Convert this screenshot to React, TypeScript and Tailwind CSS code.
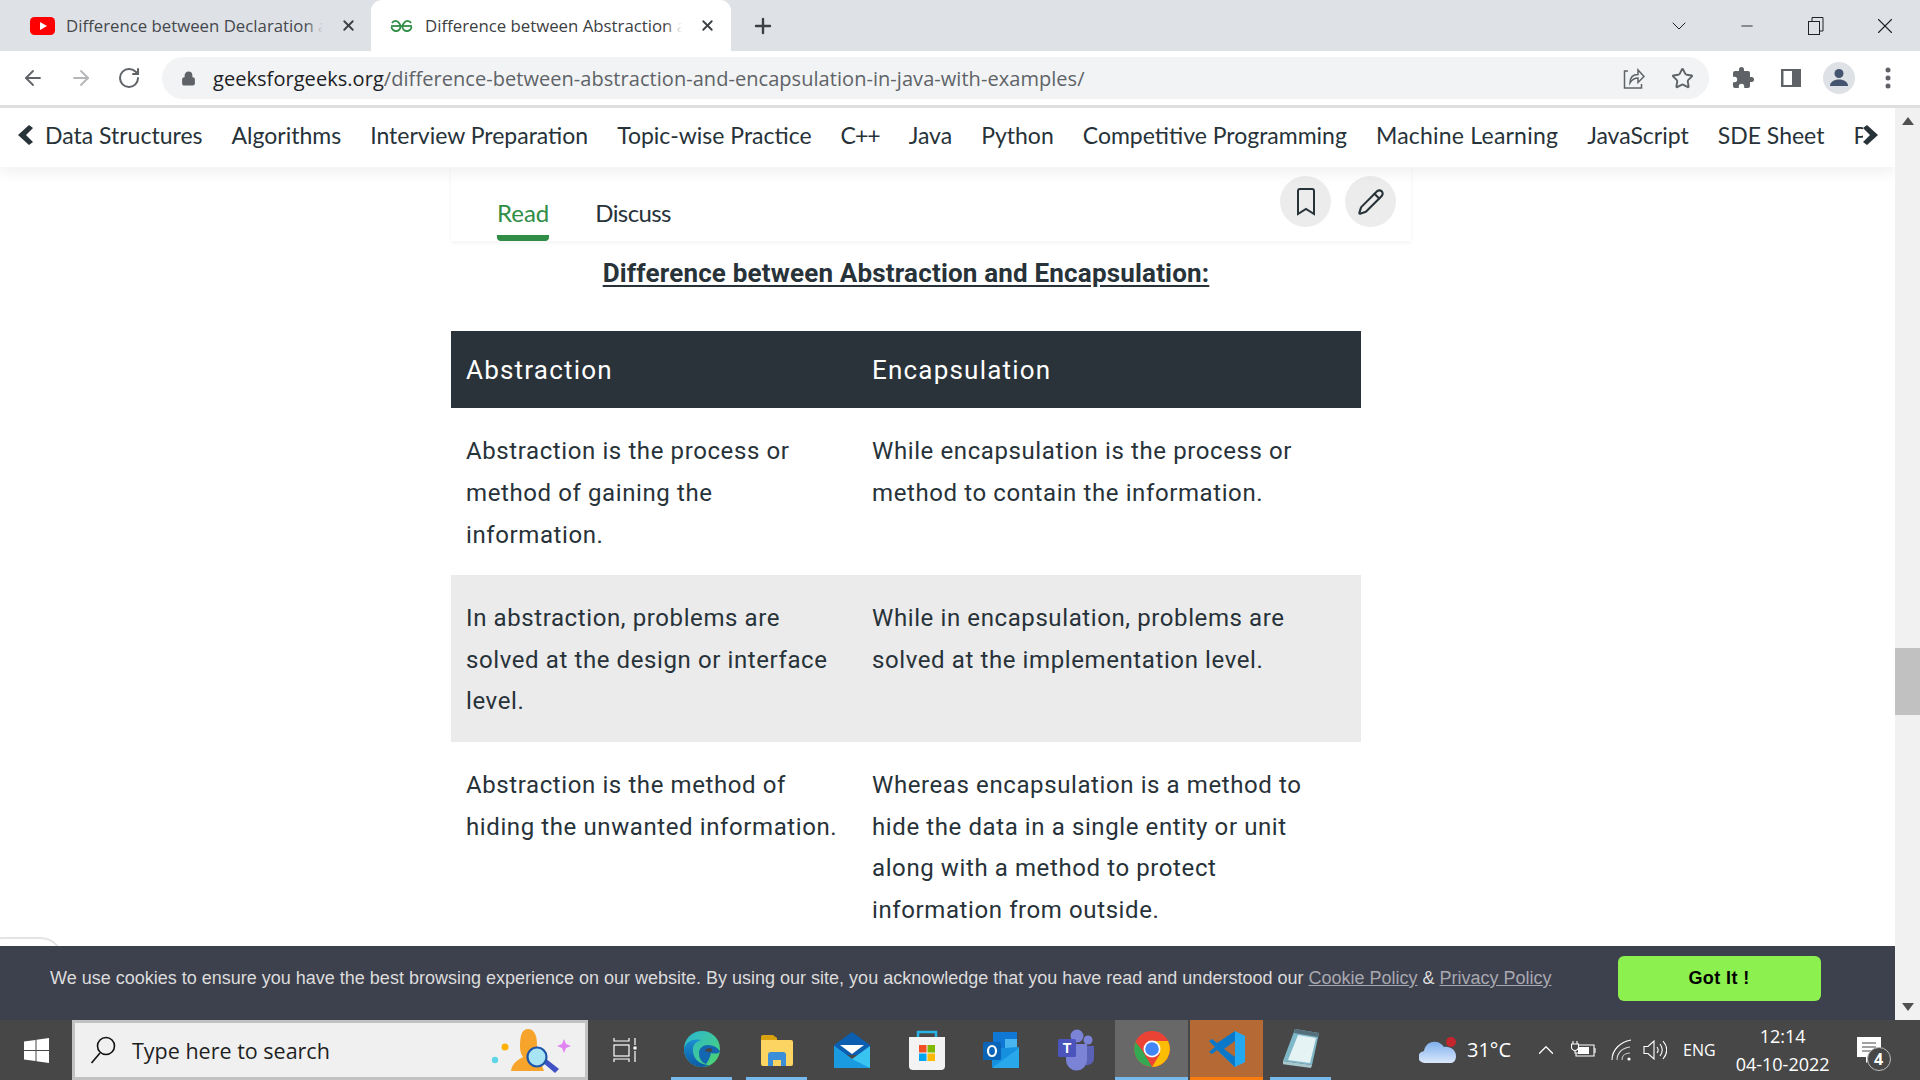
import { ArrowLeft, ArrowRight, RotateCw, Lock, Star, Plus, X, Minus, ChevronDown, Pencil, ChevronUp } from "lucide-react";

const navItems = ["Data Structures", "Algorithms", "Interview Preparation", "Topic-wise Practice", "C++", "Java", "Python", "Competitive Programming", "Machine Learning", "JavaScript", "SDE Sheet", "Practice"];

const rows = [
  { a: ["Abstraction is the process or", "method of gaining the", "information."], b: ["While encapsulation is the process or", "method to contain the information."], gray: false },
  { a: ["In abstraction, problems are", "solved at the design or interface", "level."], b: ["While in encapsulation, problems are", "solved at the implementation level."], gray: true },
  { a: ["Abstraction is the method of", "hiding the unwanted information."], b: ["Whereas encapsulation is a method to", "hide the data in a single entity or unit", "along with a method to protect", "information from outside."], gray: false },
];

function YoutubeIcon() {
  return (
    <svg width="25" height="18" viewBox="0 0 25 18">
      <rect width="25" height="18" rx="4.5" fill="#ff0000" />
      <path d="M10 5l7 4-7 4z" fill="#fff" />
    </svg>
  );
}

function GfgIcon() {
  return (
    <svg width="23" height="12" viewBox="0 0 23 12" fill="none" stroke="#2f8d46" strokeWidth="1.8">
      <path d="M1 6h21" />
      <path d="M2 3a4 4 0 0 1 7 0c1 1.500 1.500 2 1.500 3a4.500 4.500 0 0 1-9 1" />
      <path d="M21 3a4 4 0 0 0-7 0c-1 1.500-1.500 2-1.500 3a4.500 4.500 0 0 0 9 1" />
    </svg>
  );
}

function ShareIcon() {
  return (
    <svg width="22" height="24" viewBox="0 0 22 24" fill="none" stroke="#5f6368" strokeWidth="1.5">
      <path d="M5 5H1.500v17h17v-4" />
      <path d="M7 17c0-6 3-8.500 8-8.500V4l6 6.500-6 6V12c-4 0-6 1.500-8 5z" />
    </svg>
  );
}

function PuzzleIcon() {
  return (
    <svg width="24" height="24" viewBox="0 0 24 24" fill="#5f6368">
      <path d="M20.500 11H19V7a2 2 0 0 0-2-2h-4V3.500a2.500 2.500 0 0 0-5 0V5H4a2 2 0 0 0-2 2v3.800h1.500a2.700 2.700 0 0 1 0 5.400H2V20a2 2 0 0 0 2 2h3.800v-1.500a2.700 2.700 0 0 1 5.400 0V22H17a2 2 0 0 0 2-2v-4h1.500a2.500 2.500 0 0 0 0-5z" />
    </svg>
  );
}

function SidePanelIcon() {
  return (
    <svg width="22" height="20" viewBox="0 0 22 20">
      <rect x="1" y="1" width="20" height="18" fill="#5f6368" />
      <rect x="3.500" y="3" width="8.500" height="14" fill="#fff" />
    </svg>
  );
}

function AvatarIcon() {
  return (
    <div className="ml-[-4px] w-[32px] h-[32px] rounded-full bg-[#dee1e6] flex items-center justify-center">
      <svg width="22" height="24" viewBox="0 0 22 24" fill="#45556f">
        <circle cx="11" cy="7.500" r="4.500" />
        <path d="M2 20c0-4 4-6.500 9-6.500s9 2.500 9 6.500z" />
      </svg>
    </div>
  );
}

function NavChevron({ right }: { right?: boolean }) {
  return (
    <svg width="15" height="20" viewBox="0 0 15 20" fill="#273239" className={right ? "-scale-x-100" : ""}>
      <path d="M11 0l4 3-7 7 7 7-4 3L0 10z" />
    </svg>
  );
}

function BookmarkIcon() {
  return (
    <svg width="20" height="28" viewBox="0 0 20 28" fill="none" stroke="#273239" strokeWidth="2">
      <path d="M2 3a2 2 0 0 1 2-2h12a2 2 0 0 1 2 2v23l-8-5-8 5z" />
    </svg>
  );
}

function SearchGlass() {
  return (
    <svg width="26" height="28" viewBox="0 0 26 28" fill="none" stroke="#111" strokeWidth="1.600">
      <circle cx="16" cy="10" r="8.500" />
      <path d="M10 17L1.500 27" />
    </svg>
  );
}

function WindowsLogo() {
  return (
    <svg width="25" height="25" viewBox="0 0 25 25" fill="#fff">
      <path d="M0 3.500l11.500-1.600v10H0zM12.500 1.700L25 0v12h-12.500zM0 13h11.500v10L0 21.500zM12.500 13H25v12l-12.500-1.700z" />
    </svg>
  );
}

function CortanaArt() {
  return (
    <svg width="80" height="44" viewBox="0 0 80 44">
      <circle cx="14" cy="18" r="3.500" fill="#ffb300" />
      <circle cx="4" cy="31" r="3.200" fill="#5ed6e6" />
      <path d="M73 10l2 5 5 2-5 2-2 5-2-5-5-2 5-2z" fill="#e184f2" />
      <path d="M20 42c1-7 6-11 12-14-2-3-3-6-3-10 0-12 2-18 8-18s9 6 9 16l1 10 6 16z" fill="#f6a42c" />
      <path d="M50 32l4-3 14 11-4 4z" fill="#3f51c5" />
      <circle cx="46" cy="28" r="9.500" fill="#a9e4f5" stroke="#1e55a8" strokeWidth="2.200" />
    </svg>
  );
}

function TaskViewIcon() {
  return (
    <svg width="24" height="26" viewBox="0 0 24 26" fill="none" stroke="#fff" strokeWidth="1.200">
      <path d="M1 1v3h15V1M1 25v-3h15v3" />
      <rect x="1" y="8" width="15" height="11" />
      <path d="M22 1v7M22 14v11" />
      <rect x="20.500" y="9.500" width="3" height="3" fill="#fff" stroke="none" />
    </svg>
  );
}

function EdgeIcon() {
  return (
    <svg width="36" height="36" viewBox="0 0 36 36">
      <defs>
        <linearGradient id="edgeA" x1="0" y1="0" x2="1" y2="1">
          <stop offset="0" stopColor="#2ab5d6" />
          <stop offset="1" stopColor="#4fd66a" />
        </linearGradient>
        <linearGradient id="edgeB" x1="0" y1="0" x2="0" y2="1">
          <stop offset="0" stopColor="#1b8fd2" />
          <stop offset="1" stopColor="#0c5aa5" />
        </linearGradient>
      </defs>
      <circle cx="18" cy="18" r="18" fill="url(#edgeA)" />
      <path d="M18 36C8 36 0 28 0 18 2 10 10 7 18 9c-7 1-10 6-9 12 1 8 8 13 16 13-2 1-5 2-7 2z" fill="url(#edgeB)" />
      <path d="M15 22c0-5 4-8 9-8 5 0 9 2 12 6-1 3-5 3-9 2-1 4-2 7-5 11-5-2-7-6-7-11z" fill="#1566b0" />
      <path d="M21 20c1-3 5-4 7-2 1 1 0 3-2 3-1 0-3 0-5-1z" fill="#474747" />
    </svg>
  );
}

function FolderIcon() {
  return (
    <svg width="32" height="36" viewBox="0 0 32 36">
      <path d="M0 6a2 2 0 0 1 2-2h10l4 3v6H0z" fill="#d9a20f" />
      <path d="M0 9h30a2 2 0 0 1 2 2v22a2 2 0 0 1-2 2H2a2 2 0 0 1-2-2z" fill="#fcd462" />
      <path d="M7 35V24a3 3 0 0 1 3-3h12a3 3 0 0 1 3 3v11h-5v-6h-8v6z" fill="#3a8fd8" />
    </svg>
  );
}

function MailIcon() {
  return (
    <svg width="36" height="36" viewBox="0 0 36 36">
      <path d="M0 13L18 0l18 13v10H0z" fill="#0c5fb0" />
      <path d="M6 13h24l-12 9z" fill="#fff" />
      <path d="M0 14l18 13 18-13v22H0z" fill="#39c3f0" />
      <path d="M0 36V14l18 13 18 9z" fill="#1a9be0" />
    </svg>
  );
}

function StoreIcon() {
  return (
    <svg width="36" height="40" viewBox="0 0 36 40">
      <path d="M9 8V2h18v6" fill="none" stroke="#28b4e8" strokeWidth="2.500" />
      <path d="M0 7h36v29a4 4 0 0 1-4 4H4a4 4 0 0 1-4-4z" fill="#f3f3f3" />
      <rect x="10" y="15" width="7.500" height="7.500" fill="#f25022" />
      <rect x="18.500" y="15" width="7.500" height="7.500" fill="#7fba00" />
      <rect x="10" y="23.500" width="7.500" height="7.500" fill="#00a4ef" />
      <rect x="18.500" y="23.500" width="7.500" height="7.500" fill="#ffb900" />
    </svg>
  );
}

function OutlookIcon() {
  return (
    <svg width="36" height="36" viewBox="0 0 36 36">
      <rect x="10" y="0" width="24" height="20" fill="#0f78d4" />
      <rect x="22" y="7" width="12" height="9" fill="#49b5ee" />
      <path d="M9 17l27-2v19a2 2 0 0 1-2 2H11a2 2 0 0 1-2-2z" fill="#1490df" />
      <path d="M9 36l27-20v20z" fill="#28a8ea" />
      <rect x="0" y="10" width="18" height="18" rx="1.500" fill="#0a64b8" />
      <ellipse cx="9" cy="19" rx="4" ry="5" fill="none" stroke="#fff" strokeWidth="2.200" />
    </svg>
  );
}

function TeamsIcon() {
  return (
    <svg width="36" height="44" viewBox="0 0 36 44">
      <circle cx="30" cy="12" r="4.500" fill="#7b83d6" />
      <path d="M23 18h13v12a7 7 0 0 1-12 5z" fill="#5a62b8" />
      <circle cx="19" cy="8" r="6.500" fill="#7b83d6" />
      <path d="M8 16h21v16a10.500 10.500 0 0 1-21 0z" fill="#7b83d6" />
      <rect x="0" y="11" width="18" height="18" rx="1.500" fill="#4b53bc" />
      <text x="9" y="25" textAnchor="middle" fontFamily="Liberation Sans" fontSize="14" fontWeight="700" fill="#fff">T</text>
    </svg>
  );
}

function ChromeIcon() {
  return (
    <svg width="36" height="36" viewBox="0 0 36 36">
      <circle cx="18" cy="18" r="18" fill="#ea4335" />
      <path d="M18 36L8 19 1.500 11A18 18 0 0 0 18 36z" fill="#34a853" />
      <path d="M18 36a18 18 0 0 0 16-26H18l8 13z" fill="#fbbc05" />
      <circle cx="18" cy="18" r="8.500" fill="#fff" />
      <circle cx="18" cy="18" r="6.800" fill="#4285f4" />
    </svg>
  );
}

function VsCodeIcon() {
  return (
    <svg width="36" height="36" viewBox="0 0 36 36">
      <path d="M26 0l10 5v26l-10 5-15-14 15-11z" fill="#23a9f2" />
      <path d="M26 0v36L8 19l-5 4-3-2 6-5-6-6 3-2 5 4z" fill="#0a78c8" />
      <path d="M26 10v16l-11-8z" fill="#b56a35" />
    </svg>
  );
}

function NotepadIcon() {
  return (
    <svg width="36" height="42" viewBox="0 0 36 42">
      <path d="M12 1l24 4-7 32-29-4z" fill="#7fb8c8" />
      <path d="M12 1l24 4-1 4-24-4z" fill="#55707a" />
      <path d="M15 7l18 3-6 25-22-3z" fill="#e6f3f4" />
      <path d="M0 33l29 4-1 3-29-4z" fill="#a8c8d0" />
    </svg>
  );
}

function CloudIcon() {
  return (
    <svg width="38" height="28" viewBox="0 0 38 28">
      <defs>
        <linearGradient id="cloudA" x1="0" y1="0" x2="0" y2="1">
          <stop offset="0" stopColor="#7fb0ee" />
          <stop offset="1" stopColor="#dbe8fb" />
        </linearGradient>
      </defs>
      <path d="M6 27a6 6 0 0 1-1-12c1-6 6-10 12-9 3 0 6 2 8 5 6-1 12 3 12 9 0 4-2 7-5 7z" fill="url(#cloudA)" />
      <circle cx="32" cy="6" r="5" fill="#c4262e" />
    </svg>
  );
}

function BatteryIcon() {
  return (
    <svg width="25" height="22" viewBox="0 0 25 22" fill="none" stroke="#fff" strokeWidth="1.100">
      <path d="M2 2v3M6 2v3M0.500 5h7v3a3 3 0 0 1-7 0zM4 11v3h3" />
      <path d="M8 6h15v11H5v-3" />
      <rect x="7" y="8" width="11" height="7" fill="#fff" stroke="none" />
      <path d="M24 9v5" />
    </svg>
  );
}

function WifiIcon() {
  return (
    <svg width="22" height="22" viewBox="0 0 22 22" fill="none" stroke="#fff" strokeWidth="1.100">
      <path d="M1 21C1 11 9 3 20 1" />
      <path d="M6 21c0-7 5-12 13-13" opacity="0.800" />
      <path d="M11 21c0-4 3-7 8-7" opacity="0.700" />
      <circle cx="18" cy="20" r="1.600" fill="#fff" stroke="none" />
    </svg>
  );
}

function VolumeIcon() {
  return (
    <svg width="24" height="22" viewBox="0 0 24 22" fill="none" stroke="#fff" strokeWidth="1.100">
      <path d="M1 7.500h4L11 2v18l-6-5.500H1z" />
      <path d="M14 8c1.500 2 1.500 4 0 6" />
      <path d="M17 5c3 4 3 8 0 12" />
      <path d="M20 2c5 6 5 12 0 18" />
    </svg>
  );
}

function NotificationIcon() {
  return (
    <svg width="24" height="26" viewBox="0 0 24 26">
      <path d="M0 0h24v20h-9l-6 6v-6H0z" fill="#fff" />
      <path d="M5 6h14M5 10h14M5 14h10" stroke="#474747" strokeWidth="1.200" />
    </svg>
  );
}

function TaskCell({ children, bar, bg }: { children: React.ReactNode; bar?: string; bg?: string }) {
  return (
    <div className={`w-[73px] h-full shrink-0 flex items-center justify-center border-b-[3px] ${bg || ""} ${bar || "border-transparent"}`}>
      {children}
    </div>
  );
}

export default function App() {
  return (
    <div className="w-[1920px] h-[1080px] overflow-hidden flex flex-col bg-white font-['Open_Sans',sans-serif]">
      {/* tabs */}
      <div className="h-[51px] shrink-0 bg-[#dee1e6] flex">
        <div className="w-[371px] pl-[30px] flex items-center">
          <YoutubeIcon />
          <div className="relative w-[265px] ml-[11px] overflow-hidden whitespace-nowrap text-[16.8px] text-[#45484d]">
            Difference between Declaration and
            <div className="absolute right-0 top-0 bottom-0 w-[26px] bg-gradient-to-r from-transparent to-[#dee1e6] to-70%"></div>
          </div>
          <X size={17} strokeWidth={2.6} className="ml-[9px] text-[#3c4043]" />
        </div>
        <div className="w-[360px] bg-white rounded-t-[11px] pl-[19px] flex items-center">
          <GfgIcon />
          <div className="relative w-[265px] ml-[12px] overflow-hidden whitespace-nowrap text-[16.8px] text-[#3c4043]">
            Difference between Abstraction and
            <div className="absolute right-0 top-0 bottom-0 w-[26px] bg-gradient-to-r from-transparent to-white to-70%"></div>
          </div>
          <X size={17} strokeWidth={2.6} className="ml-[9px] text-[#3c4043]" />
        </div>
        <div className="w-[64px] flex items-center justify-center">
          <Plus size={24} strokeWidth={2.4} className="text-[#3c4043]" />
        </div>
        <div className="flex-1"></div>
        <div className="w-[67px] flex items-center justify-center">
          <ChevronDown size={24} strokeWidth={1} className="text-[#202124]" />
        </div>
        <div className="w-[69px] flex items-center justify-center">
          <Minus size={18} strokeWidth={1.2} className="text-[#202124]" />
        </div>
        <div className="w-[69px] flex items-center justify-center">
          <svg width="16" height="18" viewBox="0 0 16 18" fill="none" stroke="#202124">
            <rect x="0.500" y="4.500" width="11" height="13" />
            <path d="M4 4V0.500h11V14h-3.500" />
          </svg>
        </div>
        <div className="w-[70px] flex items-center justify-center">
          <X size={26} strokeWidth={1} className="text-[#202124]" />
        </div>
      </div>

      {/* toolbar */}
      <div className="h-[57px] shrink-0 bg-white border-b-[3px] border-[#dedfe0] flex pt-[6px] items-start">
        <div className="w-[162px] h-[42px] pl-[21px] flex items-center gap-[24px] shrink-0">
          <ArrowLeft size={24} strokeWidth={1.8} className="text-[#5f6368]" />
          <ArrowRight size={24} strokeWidth={1.8} className="text-[#b4b6b9]" />
          <RotateCw size={24} strokeWidth={2} className="text-[#5f6368]" />
        </div>
        <div className="w-[1547px] h-[42px] rounded-full bg-[#f1f3f4] flex items-center pl-[19px] pr-[15px]">
          <Lock size={15} fill="#5f6368" strokeWidth={2.4} className="text-[#5f6368]" />
          <div className="ml-[17px] flex-1 pt-[2px] text-[20px] text-[#5f6368] whitespace-nowrap tracking-[0.05px]">
            <span className="text-[#202124]">geeksforgeeks.org</span>/difference-between-abstraction-and-encapsulation-in-java-with-examples/
          </div>
          <ShareIcon />
          <Star size={23} strokeWidth={2} className="ml-[26px] text-[#5f6368]" />
        </div>
        <div className="h-[42px] flex-1 flex items-center pl-[22px] gap-[25px]">
          <PuzzleIcon />
          <SidePanelIcon />
          <AvatarIcon />
          <svg width="6" height="24" viewBox="0 0 6 24" fill="#5f6368" className="ml-[5px]">
            <circle cx="3" cy="4" r="2.500" />
            <circle cx="3" cy="12" r="2.500" />
            <circle cx="3" cy="20" r="2.500" />
          </svg>
        </div>
      </div>

      {/* page */}
      <div className="flex-1 flex min-h-0">
        <div className="relative w-[1895px] flex flex-col overflow-hidden">
          <div className="relative h-[59px] shrink-0 bg-white shadow-[0_6px_14px_rgba(0,0,0,0.06)] z-10 flex items-center pb-[5px] pl-[45px] gap-[29px] overflow-hidden whitespace-nowrap font-['Lato',sans-serif] text-[23px] text-[#273239]">
            {navItems.map((item) => (
              <span key={item} className={item === "C++" ? "tracking-[-1px]" : item === "Machine Learning" ? "tracking-[0.22px]" : ""}>{item}</span>
            ))}
            <div className="absolute left-0 top-0 bottom-0 w-[40px] bg-white flex items-center pl-[18px] pb-[5px]">
              <NavChevron />
            </div>
            <div className="absolute right-0 top-0 bottom-0 w-[32px] bg-white flex items-center pb-[5px]">
              <NavChevron right />
            </div>
          </div>

          <div className="pl-[451px]">
            <div className="w-[960px] h-[74px] shadow-[0_2px_4px_rgba(0,0,0,0.05)] flex">
              <div className="pl-[46px] flex gap-[46px] font-['Lato',sans-serif] text-[24px]">
                <div className="h-[74px] flex flex-col text-[#2f8d46]">
                  <div className="flex-1 pt-[28px]">Read</div>
                  <div className="h-[6px] rounded-b-[4px] bg-[#2f8d46]"></div>
                </div>
                <div className="pt-[28px] text-[#273239] tracking-[-0.6px]">Discuss</div>
              </div>
              <div className="flex-1"></div>
              <div className="flex gap-[14px] pt-[9px] pr-[15px]">
                <div className="w-[51px] h-[51px] rounded-full bg-[#ececec] flex items-center justify-center">
                  <BookmarkIcon />
                </div>
                <div className="w-[51px] h-[51px] rounded-full bg-[#ececec] flex items-center justify-center">
                  <Pencil size={28} strokeWidth={1.8} className="text-[#273239]" />
                </div>
              </div>
            </div>

            <div className="w-[910px] h-[90px] pt-[13px] text-center font-['Roboto',sans-serif] font-bold text-[26px] text-[#273239] underline underline-offset-[3px] tracking-[0.18px]">
              Difference between Abstraction and Encapsulation:
            </div>

            <table className="w-[910px] table-fixed font-['Roboto',sans-serif] text-[24px] leading-[41.8px] tracking-[0.6px] text-[#273239]">
              <thead>
                <tr className="bg-[#2a3339] text-white h-[77px]">
                  <th className="w-[406px] pl-[15px] pt-[2px] text-left font-normal text-[26px] tracking-[1.2px]">Abstraction</th>
                  <th className="pl-[15px] pt-[2px] text-left font-normal text-[26px] tracking-[1.2px]">Encapsulation</th>
                </tr>
              </thead>
              <tbody>
                {rows.map((row, i) => (
                  <tr key={i} className={row.gray ? "bg-[#ebebeb]" : "bg-white"}>
                    <td className="pl-[15px] pt-[23px] pb-[18.5px] align-top whitespace-nowrap">
                      {row.a.map((line) => (
                        <div key={line}>{line}</div>
                      ))}
                    </td>
                    <td className="pl-[15px] pt-[23px] pb-[18.5px] align-top whitespace-nowrap">
                      {row.b.map((line) => (
                        <div key={line}>{line}</div>
                      ))}
                    </td>
                  </tr>
                ))}
              </tbody>
            </table>
          </div>

          {/* feedback tab corner */}
          <div className="absolute left-[-20px] bottom-[53px] w-[84px] h-[30px] rounded-t-[24px] border-2 border-[#e4e4e4] bg-white"></div>

          {/* cookie bar */}
          <div className="absolute left-0 right-0 bottom-0 h-[74px] bg-[#3d404d] flex items-center pb-[9px] pl-[50px] font-['Liberation_Sans',sans-serif] text-[18px] text-[#dcdcdc] whitespace-nowrap">
            <span>
              We use cookies to ensure you have the best browsing experience on our website. By using our site, you acknowledge that you have read and understood our{" "}
              <span className="underline text-[#a8a8b0]">Cookie Policy</span> & <span className="underline text-[#a8a8b0]">Privacy Policy</span>
            </span>
            <div className="ml-[66px] w-[203px] h-[45px] rounded-[6px] bg-[#8cf04f] flex items-center justify-center font-bold text-[#000] text-[18px] tracking-[0.4px]">Got It !</div>
          </div>
        </div>

        {/* scrollbar */}
        <div className="w-[25px] bg-[#f1f1f1] flex flex-col items-center">
          <svg width="12" height="8" viewBox="0 0 12 8" fill="#505050" className="mt-[9px]">
            <path d="M6 0l6 8H0z" />
          </svg>
          <div className="w-full h-[67px] mt-[523px] bg-[#c1c1c1]"></div>
          <div className="flex-1"></div>
          <svg width="12" height="8" viewBox="0 0 12 8" fill="#505050" className="mb-[9px]">
            <path d="M6 8l6-8H0z" />
          </svg>
        </div>
      </div>

      {/* taskbar */}
      <div className="h-[60px] shrink-0 bg-[#474747] flex items-center text-white">
        <div className="w-[72px] h-full flex items-center justify-center shrink-0">
          <WindowsLogo />
        </div>
        <div className="w-[516px] h-full shrink-0 bg-[#f0f0f0] border-[3px] border-[#c2c2c2] flex items-center pl-[15px] text-[#1f1f1f]">
          <SearchGlass />
          <span className="ml-[16px] pt-[3px] text-[21.5px]">Type here to search</span>
          <div className="flex-1"></div>
          <div className="mr-[14px] mt-[2px]">
            <CortanaArt />
          </div>
        </div>
        <div className="w-[69px] pl-[5px] h-full flex items-center justify-center shrink-0">
          <TaskViewIcon />
        </div>
        <div className="ml-[14px] flex h-full">
          <div className="w-[61px] h-full flex items-center justify-center border-b-[3px] border-[#76b9ed]">
            <EdgeIcon />
          </div>
          <div className="ml-[14px] w-[61px] h-full flex items-center justify-center border-b-[3px] border-[#76b9ed]">
            <FolderIcon />
          </div>
          <div className="ml-[14px] w-[61px] h-full flex items-center justify-center">
            <MailIcon />
          </div>
          <div className="ml-[14px] w-[61px] h-full flex items-center justify-center">
            <StoreIcon />
          </div>
          <div className="ml-[13px] w-[61px] h-full flex items-center justify-center">
            <OutlookIcon />
          </div>
          <div className="ml-[14px] w-[61px] h-full flex items-center justify-center">
            <TeamsIcon />
          </div>
          <div className="ml-[9px] flex gap-[2px] h-full">
            <TaskCell bg="bg-[#686868]" bar="border-[#76b9ed]">
              <ChromeIcon />
            </TaskCell>
            <TaskCell bg="bg-[#b56a35]" bar="border-[#f97d0e]">
              <VsCodeIcon />
            </TaskCell>
          </div>
          <div className="ml-[7px] w-[61px] h-full flex items-center justify-center border-b-[3px] border-[#76b9ed]">
            <NotepadIcon />
          </div>
        </div>
        <div className="ml-[88px] flex items-center shrink-0">
          <CloudIcon />
          <span className="ml-[10px] text-[20px]">31°C</span>
        </div>
        <ChevronUp size={26} strokeWidth={1.2} className="ml-[22px]" />
        <div className="ml-[12px]">
          <BatteryIcon />
        </div>
        <div className="ml-[15px]">
          <WifiIcon />
        </div>
        <div className="ml-[10px]">
          <VolumeIcon />
        </div>
        <span className="ml-[16px] text-[16px]">ENG</span>
        <div className="ml-[17px] w-[100px] text-center text-[18px] leading-[28px]">
          <div>12:14</div>
          <div>04-10-2022</div>
        </div>
        <div className="relative ml-[24px]">
          <NotificationIcon />
          <div className="absolute left-[10px] top-[10px] w-[24px] h-[24px] rounded-full bg-[#474747] border border-[#bbb] flex items-center justify-center text-[16px] font-bold">4</div>
        </div>
      </div>
    </div>
  );
}
